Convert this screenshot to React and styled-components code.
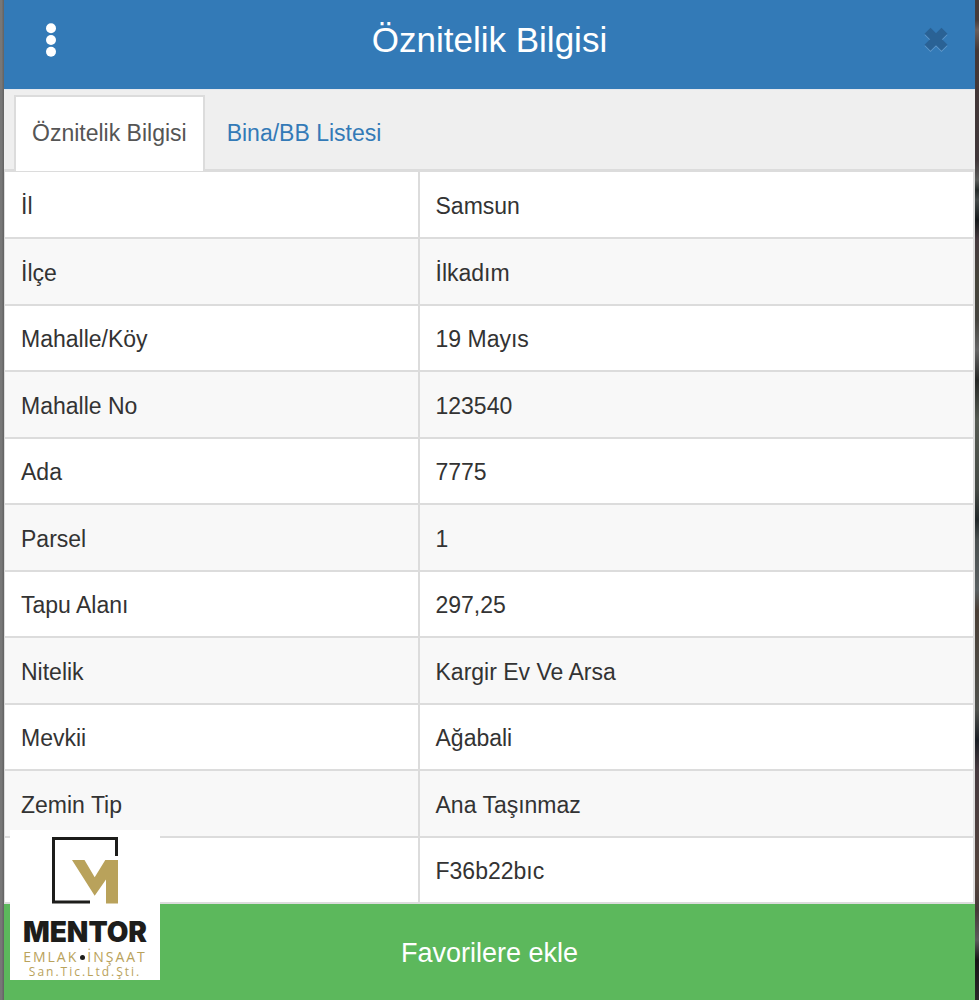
import React, { useState } from 'react';
import styled, { createGlobalStyle } from 'styled-components';

const GlobalStyle = createGlobalStyle`
  * {
    box-sizing: border-box;
  }

  body {
    margin: 0;
    font-family: "Liberation Sans", Arial, sans-serif;
    color: #333;
  }
`;

const Page = styled.div`
  display: flex;
  min-height: 100vh;
  padding: 0 4px;
  background:
    linear-gradient(90deg, #777 0, #777 2px, #666 3px) left / 4px 100% no-repeat,
    linear-gradient(#463c3b 0%, #463c3b 2%, #6b5f5c 3%, #443837 5%, #40373a 16%, #5a5c5a 18%, #262b2a 19%,
      #454a4a 20%, #15191b 22%, #453a3e 24%, #45443a 28%, #45443f 32%, #666 35%, #262826 38%, #555a52 42%,
      #454a45 49%, #22282a 52%, #4a5050 54%, #5a6062 59%, #4a3f36 61%, #50524e 71%, #1a1e24 74%, #463a3f 77%,
      #54443d 88%, #453a38 91%, #5c5c5c 94%, #161616 96%, #2a2a2a 100%);
`;

const Panel = styled.div`
  position: relative;
  display: flex;
  flex: 1;
  flex-direction: column;
  background-color: white;
`;

const Header = styled.header`
  display: grid;
  grid-template-columns: 94px 1fr 94px;
  align-items: center;
  height: 89px;
  padding-bottom: 10px;
  background-color: #337ab7;
`;

const Title = styled.h1`
  margin: 0;
  color: white;
  font-size: 35px;
  font-weight: 400;
  line-height: 40px;
  text-align: center;
`;

const IconButton = styled.button`
  display: flex;
  justify-content: center;
  padding: 0;
  border: none;
  background: none;
  cursor: pointer;
`;

const CloseButton = styled(IconButton)`
  justify-content: flex-end;
  padding-right: 26px;
`;

const Tabs = styled.nav`
  display: flex;
  height: 83px;
  padding: 5px 10px 0;
  border-top: 1px solid #e4e8ee;
  border-bottom: 3px solid #dcdcdc;
  background-color: #efefef;
`;

const Tab = styled.button`
  height: 76px;
  margin-right: 4px;
  padding: 0 16px 2px;
  border: 2px solid ${(props) => (props.$active ? '#dcdcdc' : 'transparent')};
  border-bottom: none;
  background-color: ${(props) => (props.$active ? 'white' : 'transparent')};
  color: ${(props) => (props.$active ? '#555' : '#337ab7')};
  font-family: inherit;
  font-size: 23px;
  cursor: pointer;
`;

const Table = styled.table`
  width: 100%;
  border-collapse: collapse;
  table-layout: fixed;
  border-left: 1px solid #dcdcdc;
  border-right: 2px solid #dcdcdc;
`;

const Row = styled.tr`
  height: 66px;

  &:nth-child(even) {
    height: 67px;
    background-color: #f8f8f8;
  }
`;

const NameCell = styled.th`
  width: 414px;
  padding: 2px 16px 0;
  border-right: 2px solid #dcdcdc;
  border-bottom: 2px solid #dcdcdc;
  font-size: 23px;
  font-weight: 400;
  line-height: 32px;
  text-align: left;
`;

const ValueCell = styled.td`
  padding: 2px 16px 0;
  border-bottom: 2px solid #dcdcdc;
  font-size: 23px;
  line-height: 32px;
`;

const FavoriteButton = styled.button`
  flex: 1;
  min-height: 96px;
  padding: 2px 0 0;
  border: none;
  background-color: #5cb85c;
  color: white;
  font-family: inherit;
  font-size: 27px;
  cursor: pointer;
`;

const Logo = styled.div`
  position: absolute;
  bottom: 20px;
  left: 6px;
  display: flex;
  flex-direction: column;
  align-items: center;
  width: 150px;
  height: 150px;
  padding-top: 7px;
  background-color: white;
  white-space: nowrap;
`;

const LogoName = styled.div`
  margin-top: 14px;
  color: #1d1d1b;
  font-family: Inter, sans-serif;
  font-size: 28px;
  font-weight: 900;
  line-height: 28px;
`;

const LogoSector = styled.div`
  display: flex;
  align-items: center;
  gap: 2px;
  margin-top: 2px;
  color: #b9a25b;
  font-family: "Open Sans", "Noto Sans", sans-serif;
  font-size: 14px;
  letter-spacing: 2px;
  line-height: 18px;
`;

const Dot = styled.span`
  width: 5px;
  height: 5px;
  border-radius: 50%;
  background-color: #1d1d1b;
`;

const LogoCompany = styled.div`
  color: #b9a25b;
  font-family: "Open Sans", "Noto Sans", sans-serif;
  font-size: 12px;
  letter-spacing: 2px;
  line-height: 12px;
`;

const rows = [
  { name: 'İl', value: 'Samsun' },
  { name: 'İlçe', value: 'İlkadım' },
  { name: 'Mahalle/Köy', value: '19 Mayıs' },
  { name: 'Mahalle No', value: '123540' },
  { name: 'Ada', value: '7775' },
  { name: 'Parsel', value: '1' },
  { name: 'Tapu Alanı', value: '297,25' },
  { name: 'Nitelik', value: 'Kargir Ev Ve Arsa' },
  { name: 'Mevkii', value: 'Ağabali' },
  { name: 'Zemin Tip', value: 'Ana Taşınmaz' },
  { name: '', value: 'F36b22bıc' },
];

const tabs = ['Öznitelik Bilgisi', 'Bina/BB Listesi'];

function App() {
  const [activeTab, setActiveTab] = useState(0);

  return (
    <Page>
      <GlobalStyle />
      <Panel>
        <Header>
          <IconButton aria-label="Menü">
            <svg width="12" height="34" viewBox="0 0 12 34" fill="white">
              <circle cx="6" cy="5.2" r="5" />
              <circle cx="6" cy="17" r="5" />
              <circle cx="6" cy="28.8" r="5" />
            </svg>
          </IconButton>
          <Title>Öznitelik Bilgisi</Title>
          <CloseButton aria-label="Kapat">
            <svg width="26" height="27" viewBox="0 0 26 27" strokeWidth="8.5" fill="none">
              <path d="M4.5 6L21.5 23M21.5 6L4.5 23" stroke="#5f98cb" />
              <path d="M4.5 4.7L21.5 21.7M21.5 4.7L4.5 21.7" stroke="#2a6295" />
            </svg>
          </CloseButton>
        </Header>
        <Tabs>
          {tabs.map((tab, index) => (
            <Tab key={tab} $active={index === activeTab} onClick={() => setActiveTab(index)}>
              {tab}
            </Tab>
          ))}
        </Tabs>
        <Table>
          <tbody>
            {rows.map((row) => (
              <Row key={row.value}>
                <NameCell scope="row">{row.name}</NameCell>
                <ValueCell>{row.value}</ValueCell>
              </Row>
            ))}
          </tbody>
        </Table>
        <FavoriteButton>Favorilere ekle</FavoriteButton>
        <Logo>
          <svg width="66" height="67" viewBox="0 0 66 67">
            <path d="M64.5 19V1.5H1.5V65H38" fill="none" stroke="#1d1d1b" strokeWidth="3" />
            <path d="M20 23H32.5L42.7 40.3L53.3 23H66V66.5H54V42.5L42.7 58.7Z" fill="#b9a25b" />
          </svg>
          <LogoName>MENTOR</LogoName>
          <LogoSector>
            <span>EMLAK</span>
            <Dot />
            <span>İNŞAAT</span>
          </LogoSector>
          <LogoCompany>San.Tic.Ltd.Şti.</LogoCompany>
        </Logo>
      </Panel>
    </Page>
  );
}

export default App;
